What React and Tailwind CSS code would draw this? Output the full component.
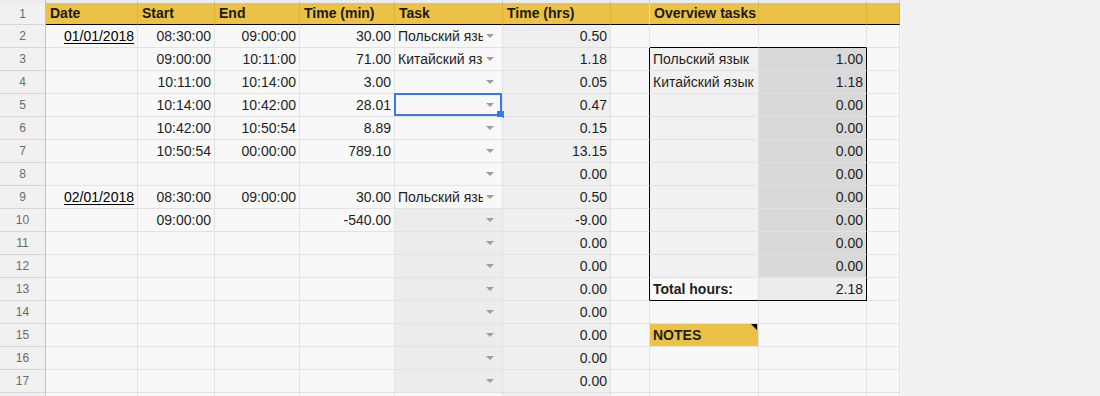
import React from "react";

const FONT = { fontFamily: '"Liberation Sans", Arial, sans-serif' };

const rows = [
  { n: 2, date: "01/01/2018", start: "08:30:00", end: "09:00:00", min: "30.00", task: "Польский язык", hrs: "0.50" },
  { n: 3, start: "09:00:00", end: "10:11:00", min: "71.00", task: "Китайский язык", hrs: "1.18", ov: ["Польский язык", "1.00"] },
  { n: 4, start: "10:11:00", end: "10:14:00", min: "3.00", hrs: "0.05", ov: ["Китайский язык", "1.18"] },
  { n: 5, start: "10:14:00", end: "10:42:00", min: "28.01", hrs: "0.47", selected: true, ov: ["", "0.00"] },
  { n: 6, start: "10:42:00", end: "10:50:54", min: "8.89", hrs: "0.15", ov: ["", "0.00"] },
  { n: 7, start: "10:50:54", end: "00:00:00", min: "789.10", hrs: "13.15", ov: ["", "0.00"] },
  { n: 8, hrs: "0.00", ov: ["", "0.00"] },
  { n: 9, date: "02/01/2018", start: "08:30:00", end: "09:00:00", min: "30.00", task: "Польский язык", hrs: "0.50", ov: ["", "0.00"] },
  { n: 10, start: "09:00:00", min: "-540.00", hrs: "-9.00", ov: ["", "0.00"] },
  { n: 11, hrs: "0.00", ov: ["", "0.00"] },
  { n: 12, hrs: "0.00", ov: ["", "0.00"] },
  { n: 13, hrs: "0.00", total: true },
  { n: 14, hrs: "0.00" },
  { n: 15, hrs: "0.00", notes: true },
  { n: 16, hrs: "0.00" },
  { n: 17, hrs: "0.00" },
  { n: 18, hrs: "" },
];

const cell =
  "h-full shrink-0 box-border border-r border-b border-[#e2e2e2] flex items-center overflow-hidden whitespace-nowrap";

function RowHead({ n }) {
  return (
    <div className="h-full w-[46px] shrink-0 box-border border-r border-r-[#c2c2c2] border-b border-b-[#d6d6d6] bg-[#f1f1f1] flex items-center justify-center text-[12px] text-[#6b6b6b]">
      {n}
    </div>
  );
}

function Arrow() {
  return (
    <div className="mr-[8px] w-0 h-0 border-l-[4px] border-r-[4px] border-t-[4px] border-l-transparent border-r-transparent border-t-[#9d9d9d]" />
  );
}

function Row({ r }) {
  const inBox = r.n >= 3 && r.n <= 13;
  const top = r.n === 2;
  return (
    <div className="flex h-[23px] text-[14px] text-[#1f1f1f]">
      <RowHead n={r.n} />
      <div className={`${cell} w-[92px] justify-end pr-[3px]`}>
        {r.date && <span className="underline underline-offset-2 decoration-1 text-black">{r.date}</span>}
      </div>
      <div className={`${cell} w-[77px] justify-end pr-[3px]`}>{r.start}</div>
      <div className={`${cell} w-[85px] justify-end pr-[3px]`}>{r.end}</div>
      <div className={`${cell} w-[95px] justify-end pr-[3px]`}>{r.min}</div>
      <div
        className={`${cell} w-[108px] justify-between pl-[3px] relative overflow-visible ${
          r.n >= 10 && r.n <= 17 ? "bg-[#ececec]" : "bg-[#f8f8f8]"
        }`}
      >
        <span className="w-[85px] overflow-hidden whitespace-nowrap">{r.task}</span>
        {r.n <= 17 && <Arrow />}
        {r.selected && (
          <div className="absolute -left-[1px] -top-[1px] right-0 bottom-0 border-2 border-[#3b78e7] pointer-events-none">
            <div className="absolute -right-[4px] -bottom-[4px] w-[7px] h-[7px] bg-[#3b78e7]" />
          </div>
        )}
      </div>
      <div className={`${cell} w-[108px] justify-end pr-[3px] bg-[#efefef]`}>{r.hrs}</div>
      <div className={`${cell} w-[39px] ${inBox ? "border-r-black" : ""}`} />
      <div
        className={`${cell} w-[109px] pl-[3px] relative ${top || r.total ? "border-b-black" : ""} ${
          r.ov ? "bg-[#f1f1f1]" : r.notes ? "bg-[#ecc246]" : ""
        } ${r.total || r.notes ? "font-bold" : ""}`}
      >
        {r.ov && r.ov[0]}
        {r.total && "Total hours:"}
        {r.notes && (
          <>
            NOTES
            <div className="absolute top-0 right-[1px] w-0 h-0 border-l-[6px] border-t-[6px] border-l-transparent border-t-black" />
          </>
        )}
      </div>
      <div
        className={`${cell} w-[108px] justify-end pr-[3px] ${inBox ? "border-r-black" : ""} ${
          top || r.total ? "border-b-black" : ""
        } ${r.ov ? "bg-[#d9d9d9]" : r.total ? "bg-[#ececec]" : ""}`}
      >
        {r.ov && r.ov[1]}
        {r.total && "2.18"}
      </div>
      <div className={`${cell} w-[33px]`} />
    </div>
  );
}

const headers = [
  ["w-[92px]", "Date"],
  ["w-[77px]", "Start"],
  ["w-[85px]", "End"],
  ["w-[95px]", "Time (min)"],
  ["w-[108px]", "Task"],
  ["w-[108px]", "Time (hrs)"],
  ["w-[39px]", ""],
  ["w-[109px]", "Overview tasks"],
  ["w-[108px]", ""],
  ["w-[33px]", ""],
];

export default function App() {
  return (
    <div className="flex w-[1100px] h-[396px] overflow-hidden bg-[#f1f1f1]" style={FONT}>
      <div className="w-[901px] shrink-0 bg-[#f8f8f8]">
        <div className="flex h-[3px] bg-[#ececec]">
          <div className="w-[46px] shrink-0 border-r border-[#c2c2c2]" />
          {headers.map(([w], i) => (
            <div key={i} className={`${w} shrink-0 box-border border-r border-[#d0d0d0]`} />
          ))}
        </div>
        <div className="flex h-[22px] text-[14px] font-bold text-[#1a1a1a]">
          <div className="h-full w-[46px] shrink-0 box-border border-r border-r-[#c2c2c2] border-b border-b-[#d6d6d6] bg-[#f1f1f1] flex items-center justify-center text-[12px] font-normal text-[#6b6b6b]">
            1
          </div>
          {headers.map(([w, t], i) => (
            <div
              key={i}
              className={`${w} h-full shrink-0 box-border bg-[#ecc246] border-b border-b-black border-r ${
                i === 6 ? "border-r-[#e2e2e2]" : "border-r-[#dfb63d]"
              } flex items-center pl-[4px] whitespace-nowrap overflow-visible ${i === 9 ? "bg-[#ecc246]" : ""}`}
            >
              {t}
            </div>
          ))}
        </div>
        {rows.map((r) => (
          <Row key={r.n} r={r} />
        ))}
      </div>
      <div className="flex-1 bg-[#f1f1f1]" />
    </div>
  );
}
